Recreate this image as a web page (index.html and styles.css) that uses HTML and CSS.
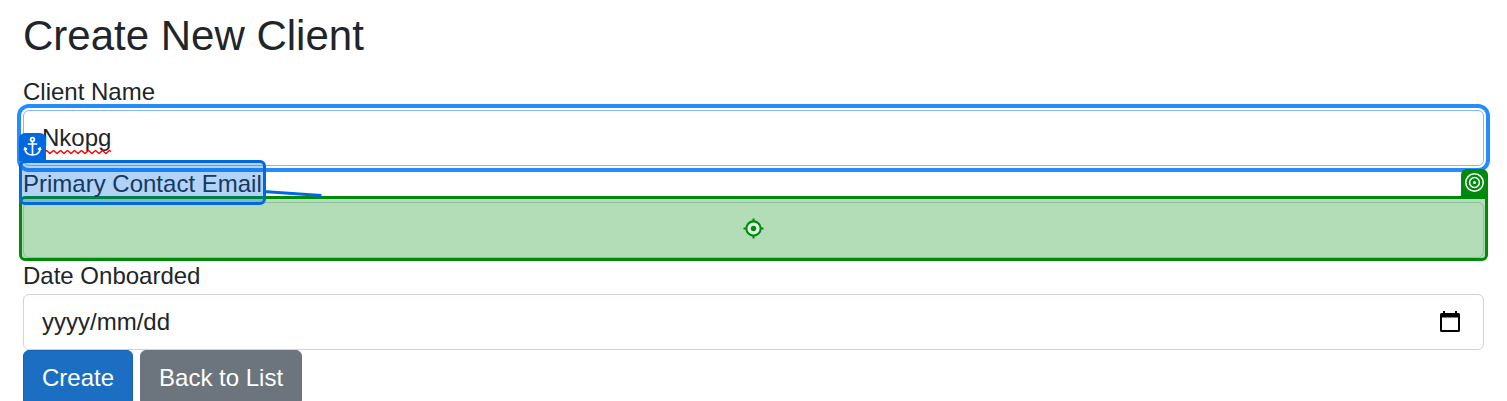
FILE: index.html
```html
<!DOCTYPE html>
<html lang="en">
<head>
<meta charset="utf-8">
<title>Create New Client</title>
<link rel="stylesheet" href="styles.css">
</head>
<body>
<main class="page">
  <h1 class="title">Create New Client</h1>
  <form class="form">
    <label class="label">Client Name</label>
    <div class="control focused"><span class="misspelled">Nkopg<svg class="squiggle" width="70" height="6" viewBox="0 0 70 6"><path d="M0 4.500L1 4.500L4.500 1.500L8 4.500L11.500 1.500L15 4.500L18.500 1.500L22 4.500L25.500 1.500L29 4.500L32.500 1.500L36 4.500L39.500 1.500L43 4.500L46.500 1.500L50 4.500L53.500 1.500L57 4.500L60.500 1.500L64 4.500L67.500 1.500L69 2.500" fill="none" stroke="#f00" stroke-width="1.500" stroke-linejoin="round"/></svg></span></div>
    <div class="label-row">
      <label class="label">Primary Contact Email</label>
      <svg class="connector" width="60" height="10" viewBox="0 0 60 10"><path d="M0 2.500 L58.500 6.600" stroke="#0069e0" stroke-width="3"/></svg>
      <div class="anchor-box"></div>
      <div class="anchor-badge"><svg width="27" height="28" viewBox="0 0 27 28" fill="none" stroke="#fff" stroke-width="1.700"><circle cx="13.500" cy="6.500" r="1.900"/><path d="M13.500 8.400V22M8.700 11H18.300M5.800 15.500C6.300 19.600 9.500 22 13.500 22S20.700 19.600 21.200 15.500M5.300 17.300L6 15L8 16.400M21.700 17.300L21 15L19 16.400"/></svg></div>
    </div>
    <div class="control target">
      <div class="target-box"><svg width="21" height="21" viewBox="0 0 22 22"><g fill="none" stroke="#008a0b" stroke-width="2.200"><circle cx="11" cy="11" r="7.500" fill="#e3f3e3"/><path d="M11 .5V4M11 18V21.500M.5 11H4M18 11H21.500"/></g><circle cx="11" cy="11" r="2.800" fill="#008a0b"/></svg></div>
      <div class="target-badge"><svg width="27" height="28" viewBox="0 0 27 28"><g fill="none" stroke="#fff" stroke-width="1.500"><circle cx="13.500" cy="13.500" r="8.700"/><circle cx="13.500" cy="13.500" r="4.900"/></g><circle cx="13.500" cy="13.500" r="1.500" fill="#fff"/></svg></div>
    </div>
    <label class="label">Date Onboarded</label>
    <div class="control date"><span>yyyy/mm/dd</span><svg width="20" height="22" viewBox="0 0 20 22"><path d="M3 0H5V2H15V0H17V2H18.500Q20 2 20 3.500V19.500Q20 21 18.500 21H1.500Q0 21 0 19.500V3.500Q0 2 1.500 2H3ZM2 6.500V19H18V6.500Z" fill="#000" fill-rule="evenodd"/></svg></div>
    <div class="actions">
      <button type="button" class="button primary">Create</button>
      <button type="button" class="button secondary">Back to List</button>
    </div>
  </form>
</main>
</body>
</html>
```
FILE: styles.css
```css
* { box-sizing: border-box; }
html { overflow: hidden; }
body {
  margin: 0;
  height: 401px;
  overflow: hidden;
  background: #fff;
  color: #212529;
  font: 24px/36px "Liberation Sans", Arial, sans-serif;
}
.page { padding: 11px 23px 0; }
.title { margin: 0 0 13px; font-size: 42px; line-height: 50px; font-weight: 400; }
.form { display: flex; flex-direction: column; }
.label { display: block; }
.label-row { position: relative; z-index: 2; }
.control {
  position: relative;
  display: flex;
  align-items: center;
  height: 56px;
  padding: 0 18px;
  border: 1px solid #ced4da;
  border-radius: 6px;
  background: #fff;
}
.focused { border-color: #86b7fe; box-shadow: 0 0 0 2px #fff, 0 0 0 6px #258cfb; }
.misspelled { position: relative; }
.squiggle { position: absolute; left: 0; bottom: 1px; }
.anchor-box {
  position: absolute;
  left: -4px;
  top: -6px;
  width: 247px;
  height: 45px;
  border: 3px solid #0069e0;
  border-radius: 6px;
  background: rgba(0, 105, 224, .3);
}
.anchor-badge {
  position: absolute;
  left: -4px;
  top: -33px;
  width: 27px;
  height: 28px;
  border-radius: 6px 6px 0 0;
  background: #0069e0;
}
.anchor-badge svg, .target-badge svg { display: block; }
.connector { position: absolute; left: 240px; top: 23px; }
.target { z-index: 1; }
.target-box {
  position: absolute;
  left: -5px;
  top: -7px;
  width: 1469px;
  height: 65px;
  display: flex;
  align-items: center;
  justify-content: center;
  border: 3px solid #008a0b;
  border-radius: 6px 0 6px 6px;
  background: rgba(4, 142, 14, .3);
}
.target-badge {
  position: absolute;
  right: -5px;
  top: -34px;
  width: 27px;
  height: 28px;
  border-radius: 6px 6px 0 0;
  background: #008a0b;
}
.date { justify-content: space-between; padding-right: 23px; }
.actions { display: flex; gap: 7px; }
.button {
  height: 56px;
  padding: 0 18px;
  border: 1px solid;
  border-radius: 6px;
  color: #fff;
  font: inherit;
}
.primary { background: #1b6ec2; border-color: #1861ac; }
.secondary { background: #6c757d; border-color: #6c757d; }
```
